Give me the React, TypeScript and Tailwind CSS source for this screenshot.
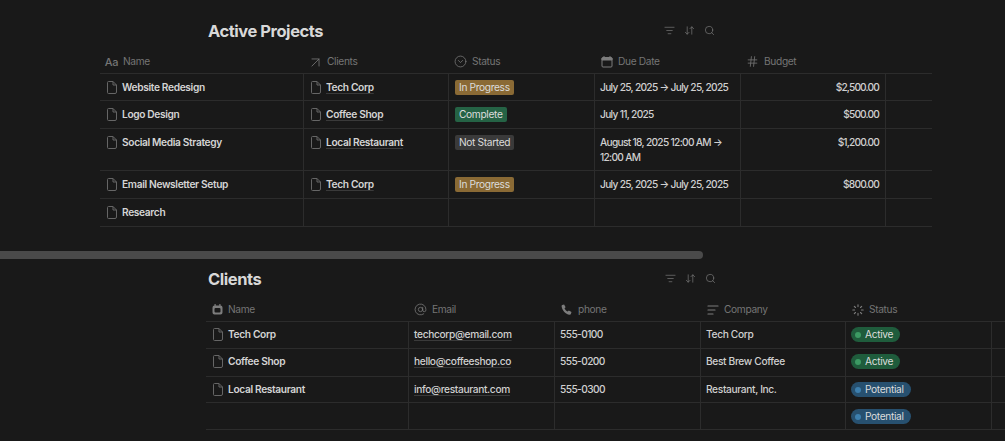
import { ArrowDownUp, ArrowUpRight, AtSign, CircleChevronDown, Hash, ListFilter, Search } from "lucide-react";
import type { ReactNode } from "react";

function PageIcon() {
  return (
    <svg width="10" height="13" viewBox="0 0 10 13" fill="none" stroke="#666666" strokeWidth="1" className="ml-[2px] shrink-0">
      <path d="M1.500 .5h4.500l3.500 3.500v7a1.500 1.500 0 0 1-1.500 1.500H1.500A1 1 0 0 1 .5 11.500v-10a1 1 0 0 1 1-1z" />
      <path d="M6 .5v3.500h3.500" />
    </svg>
  );
}

function CalendarIcon() {
  return (
    <svg width="12" height="12" viewBox="0 0 12 12" fill="none" stroke="#7d7d7d">
      <rect x="1" y="1.500" width="10" height="9.500" rx="1" strokeWidth="1" />
      <path d="M1 2h10v2H1z" fill="#7d7d7d" strokeWidth="1" />
      <path d="M3 0v2M9 0v2" strokeWidth="1" />
    </svg>
  );
}

function PhoneIcon() {
  return (
    <svg width="12" height="12" viewBox="0 0 12 12" fill="#7d7d7d">
      <path d="M1.200 1.100 3.100.5l1.500 2.700-1.100 1c.6 1.500 1.700 2.700 3.200 3.400l1.100-1.100 2.700 1.500-.6 2c-.2.6-.8.9-1.400.8C4.500 10.100 1.400 6.900.6 2.500c-.1-.6.1-1.200.6-1.400z" />
    </svg>
  );
}

function ClientIcon() {
  return (
    <svg width="11" height="11" viewBox="0 0 11 11" fill="#7d7d7d">
      <path d="M2.500 0h1.200v1.500h3.600V0h1.200v1.500a2 2 0 0 1 2 2v5a2 2 0 0 1-2 2h-6a2 2 0 0 1-2-2v-5a2 2 0 0 1 2-2z" />
      <rect x="2.500" y="4" width="6" height="4.500" rx="1" fill="#191919" />
    </svg>
  );
}

function TextLinesIcon() {
  return (
    <svg width="12" height="12" viewBox="0 0 12 12" stroke="#7d7d7d" strokeWidth="1.200" strokeLinecap="round">
      <path d="M1 2h10M1 6h7M1 10h5" />
    </svg>
  );
}

function DashedCircleIcon() {
  return (
    <svg width="12" height="12" viewBox="0 0 12 12" stroke="#7d7d7d" strokeWidth="1.100" strokeLinecap="round">
      <path d="M6 .8v1.800M6 9.400v1.800M.8 6h1.800M9.400 6h1.800M2.300 2.300l1.200 1.200M8.500 8.500l1.200 1.200M2.300 9.700l1.200-1.200M8.500 3.500l1.200-1.200" />
    </svg>
  );
}

function Tools() {
  return (
    <div className="-mt-[2px] flex items-center gap-[9px] text-[#7a7a7a]">
      <ListFilter size={11} strokeWidth={1.500} />
      <ArrowDownUp size={11} strokeWidth={1.500} />
      <Search size={11} strokeWidth={1.500} />
    </div>
  );
}

function Head({ icon, label, width, gap = "gap-[5px]" }: { icon: ReactNode; label: string; width: string; gap?: string }) {
  return (
    <div className={`${width} ${gap} flex items-center pl-[5px] text-[#757575]`}>
      <span className="flex w-[13px] justify-center">{icon}</span>
      {label}
    </div>
  );
}

function Cell({ width, children, last, py = "py-[6px]" }: { width: string; children?: ReactNode; last?: boolean; py?: string }) {
  return (
    <div className={`${width} ${py} ${last ? "" : "border-r border-[#2c2c2c]"} shrink-0 pl-[5px] pr-[6px] leading-[15px]`}>
      {children}
    </div>
  );
}

function Page({ name, link }: { name: string; link?: boolean }) {
  return (
    <div className="flex items-center gap-[5px] font-semibold text-[#d4d4d4]">
      <PageIcon />
      <span className={link ? "underline decoration-[#3a3a3a] underline-offset-2" : ""}>{name}</span>
    </div>
  );
}

function Tag({ color, text }: { color: string; text: string }) {
  return <span className={`${color} ml-[1px] inline-block rounded-[2px] px-[4px] align-top leading-[15px] text-[#dcdcdc]`}>{text}</span>;
}

function Pill({ color, dot, text }: { color: string; dot: string; text: string }) {
  return (
    <span className={`${color} inline-flex h-[15px] items-center gap-[4px] rounded-full pl-[4px] pr-[7px] align-top text-[#dcdcdc]`}>
      <span className={`${dot} h-[6px] w-[6px] rounded-full`} />
      {text}
    </span>
  );
}

const projects = [
  { name: "Website Redesign", client: "Tech Corp", status: "progress", date: "July 25, 2025 → July 25, 2025", budget: "$2,500.00", h: "h-[27px]" },
  { name: "Logo Design", client: "Coffee Shop", status: "complete", date: "July 11, 2025", budget: "$500.00", h: "h-[28px]" },
  { name: "Social Media Strategy", client: "Local Restaurant", status: "none", date: "August 18, 2025 12:00 AM → 12:00 AM", budget: "$1,200.00", h: "h-[42px]" },
  { name: "Email Newsletter Setup", client: "Tech Corp", status: "progress", date: "July 25, 2025 → July 25, 2025", budget: "$800.00", h: "h-[28px]" },
  { name: "Research", client: "", status: "", date: "", budget: "", h: "h-[28px]" },
];

const clients = [
  { name: "Tech Corp", email: "techcorp@email.com", phone: "555-0100", company: "Tech Corp", status: "Active", h: "h-[27px]", py: "py-[5px]" },
  { name: "Coffee Shop", email: "hello@coffeeshop.co", phone: "555-0200", company: "Best Brew Coffee", status: "Active", h: "h-[28px]", py: "py-[5px]" },
  { name: "Local Restaurant", email: "info@restaurant.com", phone: "555-0300", company: "Restaurant, Inc.", status: "Potential", h: "h-[26px]", py: "py-[5px]" },
  { name: "", email: "", phone: "", company: "", status: "Potential", h: "h-[27px]", py: "py-[6px]" },
];

export default function App() {
  return (
    <main className="h-[441px] w-[1005px] overflow-hidden bg-[#191919] font-['Inter',sans-serif] text-[10.200px] tracking-[-0.35px] text-[#d0d0d0]">
      {/* ACTIVE PROJECTS */}
      <section className="ml-[100px] w-[832px] pt-[20px]">
        <div className="flex h-[22px] items-center justify-between pl-[108px] pr-[217px]">
          <h2 className="text-[16.500px] font-bold tracking-[-0.45px] text-[#d8d8d8]">Active Projects</h2>
          <Tools />
        </div>
        <div className="mt-[9px] flex h-[23px] items-center border-b border-[#2c2c2c]">
          <Head width="w-[204px]" label="Name" icon={<span className="text-[11px] font-medium">Aa</span>} />
          <Head width="w-[145px]" label="Clients" icon={<ArrowUpRight size={17} strokeWidth={1.200} className="shrink-0" />} />
          <Head width="w-[146px]" label="Status" icon={<CircleChevronDown size={13} strokeWidth={1.500} className="shrink-0" />} />
          <Head width="w-[146px]" label="Due Date" icon={<CalendarIcon />} />
          <Head width="w-[145px]" label="Budget" icon={<Hash size={13} strokeWidth={1.500} className="shrink-0" />} />
        </div>
        {projects.map((p) => (
          <div key={p.name} className={`${p.h} flex border-b border-[#2c2c2c]`}>
            <Cell width="w-[204px]"><Page name={p.name} /></Cell>
            <Cell width="w-[145px]">{p.client && <Page name={p.client} link />}</Cell>
            <Cell width="w-[146px]">
              {p.status === "progress" && <Tag color="bg-[#8a6a35]" text="In Progress" />}
              {p.status === "complete" && <Tag color="bg-[#256345]" text="Complete" />}
              {p.status === "none" && <Tag color="bg-[#3a3a3a]" text="Not Started" />}
            </Cell>
            <Cell width="w-[146px]"><div className="font-medium tracking-[-0.7px]">{p.date}</div></Cell>
            <Cell width="w-[145px]"><div className="text-right font-medium tracking-[-0.85px]">{p.budget}</div></Cell>
            <Cell width="flex-1" last />
          </div>
        ))}
      </section>

      {/* SCROLLBAR */}
      <div className="mt-[24px] h-[8px] w-[703px] rounded-r-full bg-[#4a4a4a]" />

      {/* CLIENTS */}
      <section className="ml-[206px] pt-[9px]">
        <div className="flex h-[22px] items-center pl-[2px]">
          <h2 className="w-[457px] text-[16.500px] font-bold tracking-[-0.45px] text-[#d8d8d8]">Clients</h2>
          <Tools />
        </div>
        <div className="mt-[9px] flex h-[23px] items-center border-b border-[#2c2c2c]">
          <Head width="w-[203px]" gap="gap-[4px]" label="Name" icon={<ClientIcon />} />
          <Head width="w-[146px]" label="Email" icon={<AtSign size={13} strokeWidth={1.500} className="shrink-0" />} />
          <Head width="w-[146px]" label="phone" icon={<PhoneIcon />} />
          <Head width="w-[145px]" label="Company" icon={<TextLinesIcon />} />
          <Head width="w-[146px]" label="Status" icon={<DashedCircleIcon />} />
        </div>
        {clients.map((c, i) => (
          <div key={i} className={`${c.h} flex border-b border-[#2c2c2c]`}>
            <Cell py={c.py} width="w-[203px]">{c.name && <Page name={c.name} />}</Cell>
            <Cell py={c.py} width="w-[146px]"><span className="font-medium underline decoration-[#3a3a3a] underline-offset-2">{c.email}</span></Cell>
            <Cell py={c.py} width="w-[146px]"><span className="font-medium tracking-[-0.6px]">{c.phone}</span></Cell>
            <Cell py={c.py} width="w-[145px]"><span className="font-medium">{c.company}</span></Cell>
            <Cell py={c.py} width="w-[146px]">
              {c.status === "Active" ? (
                <Pill color="bg-[#1f5c3c]" dot="bg-[#3c9a63]" text="Active" />
              ) : (
                <Pill color="bg-[#27506f]" dot="bg-[#3d7fae]" text="Potential" />
              )}
            </Cell>
            <Cell py={c.py} width="flex-1" last />
          </div>
        ))}
      </section>
    </main>
  );
}
